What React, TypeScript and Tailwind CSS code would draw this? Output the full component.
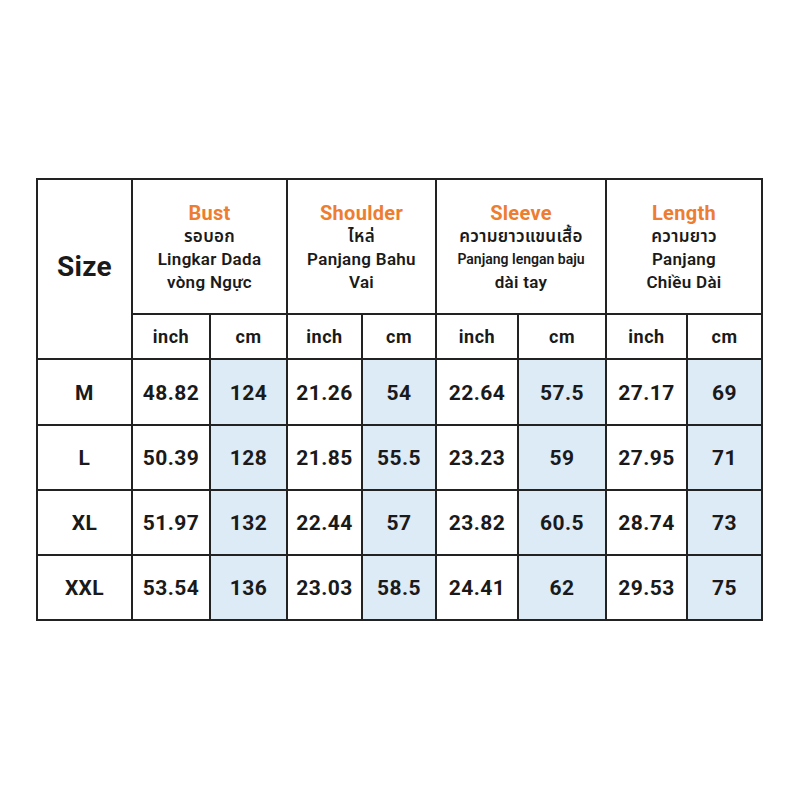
import React from "react";

const rows = [
  ["M", "48.82", "124", "21.26", "54", "22.64", "57.5", "27.17", "69"],
  ["L", "50.39", "128", "21.85", "55.5", "23.23", "59", "27.95", "71"],
  ["XL", "51.97", "132", "22.44", "57", "23.82", "60.5", "28.74", "73"],
  ["XXL", "53.54", "136", "23.03", "58.5", "24.41", "62", "29.53", "75"],
];

const font = { fontFamily: "Roboto, 'Noto Sans', 'Noto Sans Thai', 'DejaVu Sans', sans-serif" };

function Head({ title, children }: { title: string; children: React.ReactNode }) {
  return (
    <div className="col-span-2 bg-white flex flex-col items-center justify-center text-center text-[#1a1a1a] pt-[1px]">
      <div className="text-[20px] font-bold text-[#ED7D31] leading-[24px] tracking-[0.3px]">{title}</div>
      {children}
    </div>
  );
}

const line = "text-[17px] font-semibold leading-[23px] tracking-[0.3px]";

export default function App() {
  return (
    <div className="w-[800px] h-[800px] bg-white pl-[36px] pt-[178px]" style={font}>
      <div className="inline-grid grid-cols-[93px_76px_75px_73px_72px_80px_86px_79px_73px] grid-rows-[133px_43px_64px_63px_63px_63px] gap-[2px] p-[2px] bg-[#222]">
        <div className="row-span-2 bg-white flex items-center justify-center text-[28px] font-bold text-[#1a1a1a] pb-[4px] tracking-[0.3px]">
          Size
        </div>
        <Head title="Bust">
          <div className={line}>รอบอก</div>
          <div className={line}>Lingkar Dada</div>
          <div className={line}>vòng Ngực</div>
        </Head>
        <Head title="Shoulder">
          <div className={line}>ไหล่</div>
          <div className={line}>Panjang Bahu</div>
          <div className={line}>Vai</div>
        </Head>
        <Head title="Sleeve">
          <div className={line}>ความยาวแขนเสื้อ</div>
          <div className="text-[14px] font-semibold leading-[23px]">Panjang lengan baju</div>
          <div className={line}>dài tay</div>
        </Head>
        <Head title="Length">
          <div className={line}>ความยาว</div>
          <div className={line}>Panjang</div>
          <div className={line}>Chiều Dài</div>
        </Head>
        {["inch", "cm", "inch", "cm", "inch", "cm", "inch", "cm"].map((t, i) => (
          <div key={i} className="bg-white flex items-center justify-center text-[18px] font-bold text-[#1a1a1a] tracking-[0.5px]">
            {t}
          </div>
        ))}
        {rows.map((r) =>
          r.map((v, j) => (
            <div
              key={r[0] + j}
              className={
                "flex items-center justify-center pt-[3px] text-[21px] font-bold text-[#1a1a1a] tracking-[0.4px] " +
                (j > 0 && j % 2 === 0 ? "bg-[#DDEBF7]" : "bg-white")
              }
            >
              {v}
            </div>
          ))
        )}
      </div>
    </div>
  );
}
